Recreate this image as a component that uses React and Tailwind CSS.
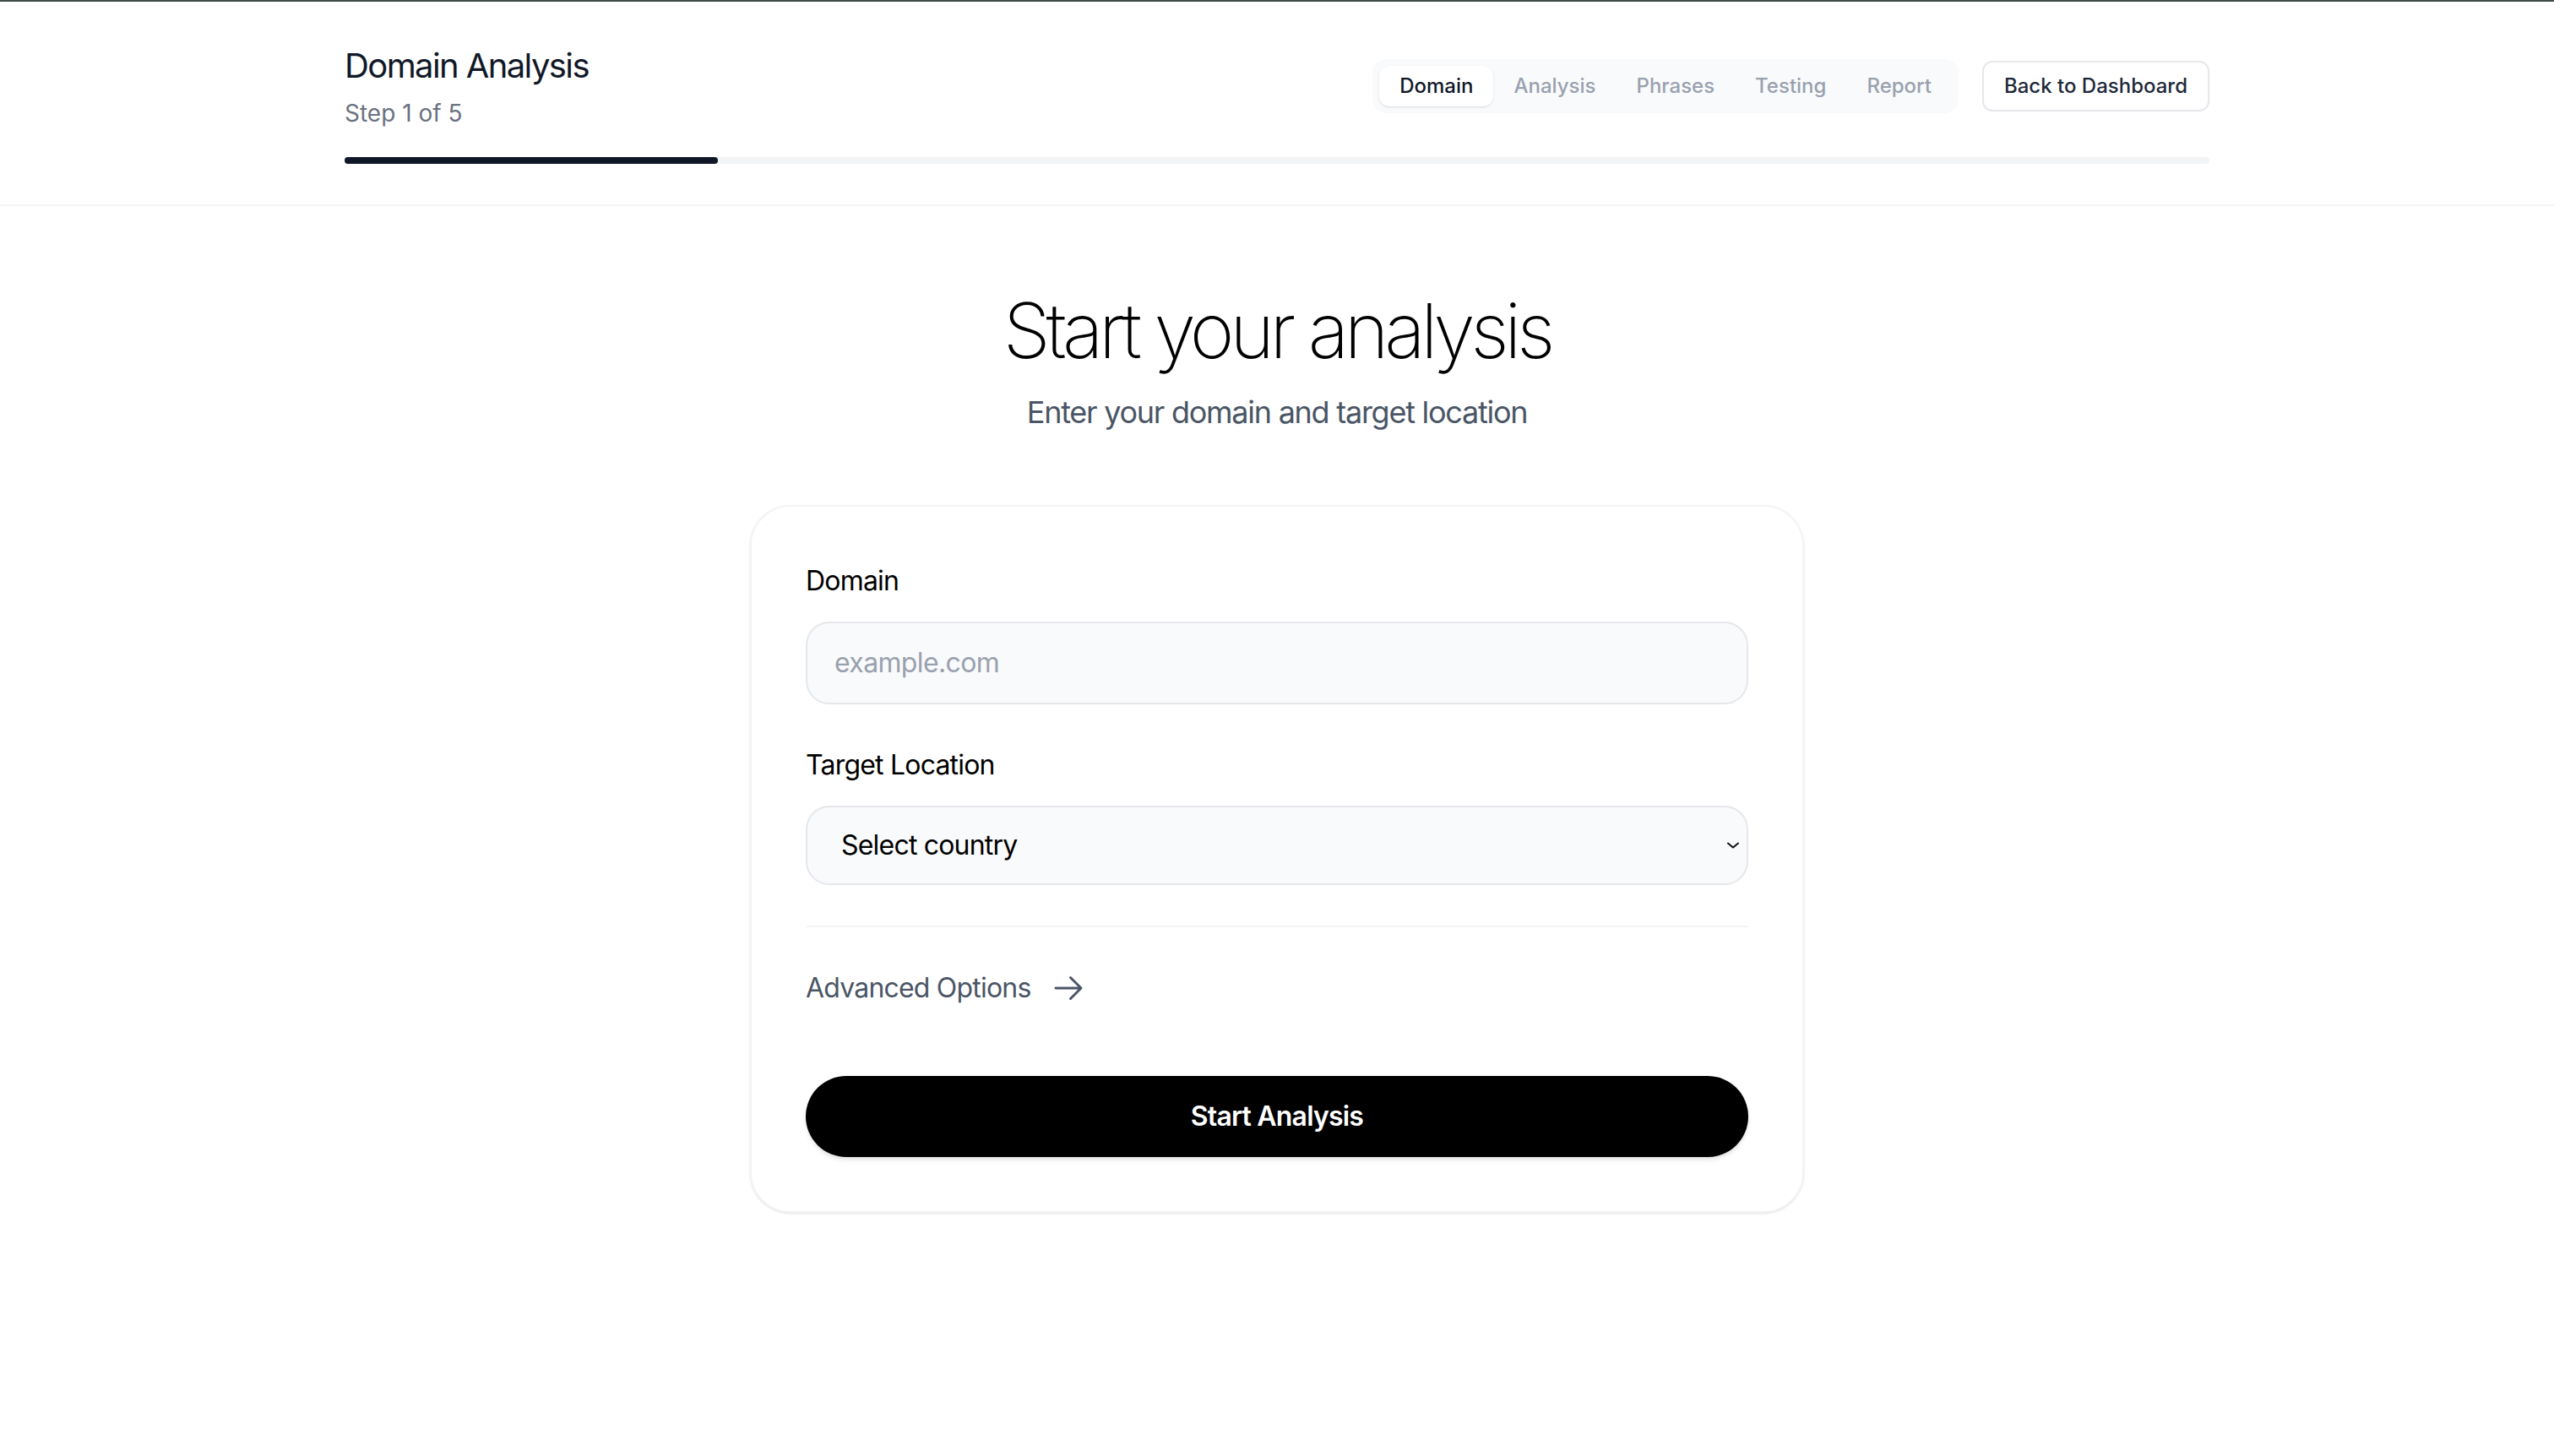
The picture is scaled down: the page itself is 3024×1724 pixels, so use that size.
const steps = ['Domain', 'Analysis', 'Phrases', 'Testing', 'Report'];

export default function App() {
  return (
    <div className="min-h-screen bg-white font-['Inter','Noto_Sans',sans-serif] text-gray-900">
      <div className="h-[2px] bg-[#3d4a45]"></div>

      {/* Header */}
      <header className="border-b-2 border-gray-100">
        <div className="mx-auto max-w-[2304px] px-12 pt-12 pb-12">
          <div className="flex items-center justify-between">
            <div>
              <h1 className="text-[40px] leading-[56px] font-normal tracking-[-0.04em] text-gray-900">Domain Analysis</h1>
              <p className="mt-2 text-[28px] leading-[40px] text-gray-500">Step 1 of 5</p>
            </div>

            <div className="flex items-center gap-7">
              <nav className="flex items-center rounded-[16px] bg-gray-50 p-2">
                {steps.map((s, i) => (
                  <span
                    key={s}
                    className={
                      i === 0
                        ? 'rounded-[12px] bg-white px-6 py-2 text-[24px] leading-[32px] font-medium text-gray-900 shadow-sm'
                        : 'px-6 py-2 text-[24px] leading-[32px] font-medium text-gray-400'
                    }
                  >
                    {s}
                  </span>
                ))}
              </nav>
              <button className="rounded-[12px] border-2 border-gray-200 bg-white px-6 py-3 text-[24px] leading-[32px] font-medium text-gray-800">
                Back to Dashboard
              </button>
            </div>
          </div>

          {/* Progress */}
          <div className="mt-8 h-2 w-full rounded-full bg-gray-100">
            <div className="h-2 w-1/5 rounded-full bg-gray-900"></div>
          </div>
        </div>
      </header>

      {/* Main */}
      <main className="mx-auto max-w-[1344px] px-12 pt-[100px] pb-24">
        <div className="text-center">
          <h2 className="text-[90px] leading-[96px] font-extralight tracking-[-0.06em] text-black">Start your analysis</h2>
          <p className="mt-5 text-[36px] leading-[56px] text-gray-600 tracking-[-0.035em]">Enter your domain and target location</p>
        </div>

        <div className="mt-[82px] rounded-[48px] border-2 border-gray-100 bg-white p-16 shadow-sm">
          <div>
            <label className="mb-6 block text-[32px] leading-[48px] text-black tracking-tight">Domain</label>
            <input
              type="text"
              placeholder="example.com"
              className="w-full rounded-[28px] border-2 border-gray-200 bg-gray-50 px-8 py-[23px] text-[32px] leading-[48px] tracking-[-0.02em] text-gray-900 placeholder:text-gray-400 outline-none"
            />
          </div>

          <div className="mt-12">
            <label className="mb-6 block text-[32px] leading-[48px] text-black tracking-tight">Target Location</label>
            <div className="relative">
              <select className="w-full appearance-none rounded-[28px] border-2 border-gray-200 bg-gray-50 px-10 py-[21px] text-[32px] leading-[48px] text-black tracking-tight outline-none">
                <option>Select country</option>
              </select>
              <svg
                className="pointer-events-none absolute right-[10px] top-1/2 -translate-y-1/2"
                width="16"
                height="10"
                viewBox="0 0 16 10"
                fill="none"
              >
                <path d="M2 2.5L8 7.5L14 2.5" stroke="#111" strokeWidth="2" strokeLinecap="round" strokeLinejoin="round" />
              </svg>
            </div>
          </div>

          <div className="mt-12 border-t-2 border-gray-100 pt-12">
            <button className="flex items-center gap-6 text-[32px] leading-[48px] text-gray-600 tracking-tight">
              Advanced Options
              <svg width="40" height="40" viewBox="0 0 24 24" fill="none" stroke="currentColor" strokeWidth="1.75" strokeLinecap="round" strokeLinejoin="round">
                <path d="M13.5 4.5 21 12m0 0-7.5 7.5M21 12H3" />
              </svg>
            </button>
          </div>

          <button className="mt-20 h-[96px] w-full rounded-full bg-black text-[32px] font-semibold text-white shadow-md tracking-tight">
            Start Analysis
          </button>
        </div>
      </main>
    </div>
  );
}
